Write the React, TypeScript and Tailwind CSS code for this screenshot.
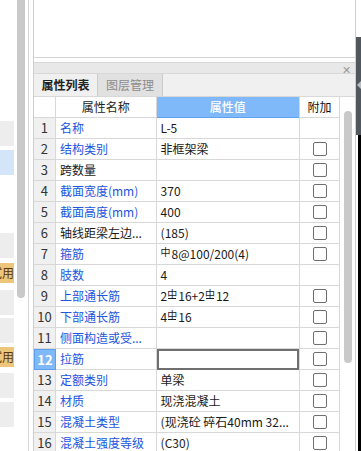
import React from "react";

type Row = {
  n: number;
  name: string;
  blue: boolean;
  val: React.ReactNode;
  cb: boolean;
  sel?: boolean;
};

const P = () => (
  <span className="inline-block text-[10px] leading-none relative -top-[2px] mr-[1px]">中</span>
);
const S = () => (
  <span className="inline-block text-[10px] leading-none relative -top-[2px] mr-[1px]">
    中
    <span className="absolute left-[1px] right-[1px] bottom-[0px] h-px bg-[#1a1a1a]" />
  </span>
);

const rows: Row[] = [
  { n: 1, name: "名称", blue: true, val: "L-5", cb: false },
  { n: 2, name: "结构类别", blue: true, val: "非框架梁", cb: true },
  { n: 3, name: "跨数量", blue: false, val: "", cb: true },
  { n: 4, name: "截面宽度(mm)", blue: true, val: "370", cb: true },
  { n: 5, name: "截面高度(mm)", blue: true, val: "400", cb: true },
  { n: 6, name: "轴线距梁左边...", blue: false, val: "(185)", cb: true },
  {
    n: 7,
    name: "箍筋",
    blue: true,
    val: (
      <>
        <P />8@100/200(4)
      </>
    ),
    cb: true,
  },
  { n: 8, name: "肢数", blue: true, val: "4", cb: false },
  {
    n: 9,
    name: "上部通长筋",
    blue: true,
    val: (
      <>
        2<S />16+2<S />12
      </>
    ),
    cb: true,
  },
  {
    n: 10,
    name: "下部通长筋",
    blue: true,
    val: (
      <>
        4<S />16
      </>
    ),
    cb: true,
  },
  { n: 11, name: "侧面构造或受...", blue: true, val: "", cb: true },
  { n: 12, name: "拉筋", blue: true, val: "", cb: true, sel: true },
  { n: 13, name: "定额类别", blue: true, val: "单梁", cb: true },
  { n: 14, name: "材质", blue: true, val: "现浇混凝土", cb: true },
  { n: 15, name: "混凝土类型", blue: true, val: "(现浇砼 碎石40mm 32...", cb: true },
  { n: 16, name: "混凝土强度等级", blue: true, val: "(C30)", cb: true },
];

export default function App() {
  return (
    <div
      className="w-[361px] h-[451px] overflow-hidden bg-white flex text-[12px] text-[#1a1a1a]"
      style={{ fontFamily: '"Noto Sans CJK SC", "Noto Sans", sans-serif' }}
    >
      {/* left strip */}
      <div className="w-[14px] flex flex-col shrink-0">
        <div className="h-[121px]" />
        <div className="h-[25px] bg-[#ededed]" />
        <div className="h-[4px]" />
        <div className="h-[25px] bg-[#d3e5f9]" />
        <div className="h-[58px]" />
        <div className="h-[25px] bg-[#ededed]" />
        <div className="h-[5px]" />
        <div className="h-[20px] bg-[#eec67a] flex justify-end items-center overflow-hidden whitespace-nowrap text-[12px] text-[#5a3510]">
          试用
        </div>
        <div className="h-[7px]" />
        <div className="h-[25px] bg-[#ededed]" />
        <div className="h-[3px]" />
        <div className="h-[25px] bg-[#ededed]" />
        <div className="h-[4px]" />
        <div className="h-[20px] bg-[#eec67a] flex justify-end items-center overflow-hidden whitespace-nowrap text-[12px] text-[#5a3510]">
          试用
        </div>
        <div className="h-[6px]" />
        <div className="h-[25px] bg-[#ededed]" />
        <div className="h-[4px]" />
        <div className="h-[25px] bg-[#ededed]" />
      </div>
      {/* scrollbar */}
      <div className="w-[8px] ml-[3px] h-[298px] bg-[#c9c9c9] rounded-b-[4px] shrink-0" />
      <div className="w-px ml-[3px] h-full bg-[#d6d6d6] shrink-0" />
      {/* panel */}
      <div className="ml-[4px] w-[323px] shrink-0 h-full border-l border-r border-[#cfcfcf] flex flex-col">
        <div className="h-[58px] border-b border-[#d4d4d4] bg-white shrink-0" />
        <div className="h-[4px] shrink-0" />
        <div className="h-[12px] border-t border-b border-[#d8d8d8] bg-[#e8e8e8] shrink-0 flex justify-end items-center pr-[4px]">
          <span className="text-[11px] leading-none text-[#9a9a9a] relative top-[1px]">✕</span>
        </div>
        <div className="h-[23px] border-b border-[#d8d8d8] bg-[#f0f0f0] shrink-0 flex">
          <div className="w-[64px] border-r border-[#cbcbcb] flex items-center justify-center font-bold text-[#222]">
            属性列表
          </div>
          <div className="w-[65px] border-r border-[#cbcbcb] bg-[#e1e1e1] flex items-center justify-center text-[#8c8c8c]">
            图层管理
          </div>
        </div>
        <div className="flex flex-1 min-h-0">
          <div className="w-[306px] border-r border-[#d8d8d8] shrink-0 flex flex-col">
            {/* header */}
            <div className="h-[21px] flex shrink-0">
              <div className="w-[22px] border-r border-b border-[#d8d8d8] bg-white" />
              <div className="w-[101px] border-r border-b border-[#d8d8d8] bg-white flex items-center justify-center text-[#222]">
                属性名称
              </div>
              <div className="w-[143px] border-b border-[#5ea2f0] bg-[#80b9f9] flex items-center justify-center text-white font-medium">
                属性值
              </div>
              <div className="w-[40px] border-l border-b border-[#d8d8d8] bg-white flex items-center justify-center text-[#111]">
                附加
              </div>
            </div>
            {rows.map((r) => (
              <div key={r.n} className="h-[21px] flex shrink-0">
                {r.sel ? (
                  <div className="w-[22px] border border-[#5c9fee] bg-[#80b9f9] flex items-center justify-center text-white font-bold text-[13px]">
                    {r.n}
                  </div>
                ) : (
                  <div className="w-[22px] border-r border-b border-[#d8d8d8] bg-[#f0f0f0] flex items-center justify-center text-[13px] text-[#333]">
                    {r.n}
                  </div>
                )}
                <div
                  className={`w-[101px] border-r border-b border-[#d8d8d8] flex items-center pl-[4px] whitespace-nowrap overflow-hidden ${
                    r.blue ? "text-[#2155e0]" : "text-[#1a1a1a]"
                  }`}
                >
                  {r.name}
                </div>
                {r.sel ? (
                  <div className="w-[143px] border-2 border-[#6f6f6f] bg-white" />
                ) : (
                  <div className="w-[143px] border-b border-[#d8d8d8] flex items-center pl-[4px] whitespace-nowrap overflow-hidden">
                    {r.val}
                  </div>
                )}
                <div className="w-[40px] border-l border-b border-[#d8d8d8] flex items-center justify-center">
                  {r.cb && (
                    <div className="w-[14px] h-[14px] border border-[#707070] rounded-[2px] bg-white" />
                  )}
                </div>
              </div>
            ))}
          </div>
          <div className="flex-1 flex flex-col pt-[14px] pl-[4px]">
            <div className="w-[8px] h-[252px] bg-[#c9c9c9] rounded-[4px]" />
          </div>
        </div>
      </div>
      {/* right edge */}
      <div className="flex-1 flex flex-col">
        <div className="h-[37px] bg-white shrink-0" />
        <div className="h-[98px] bg-[#52575d] shrink-0 flex flex-col items-center">
          <div className="h-[44px]" />
          <div className="w-0 h-0 border-y-[4px] border-y-transparent border-r-[4px] border-r-[#b8bcc0]" />
        </div>
        <div className="flex-1 flex justify-end">
          <div className="w-[3px] h-full bg-black" />
        </div>
      </div>
    </div>
  );
}
